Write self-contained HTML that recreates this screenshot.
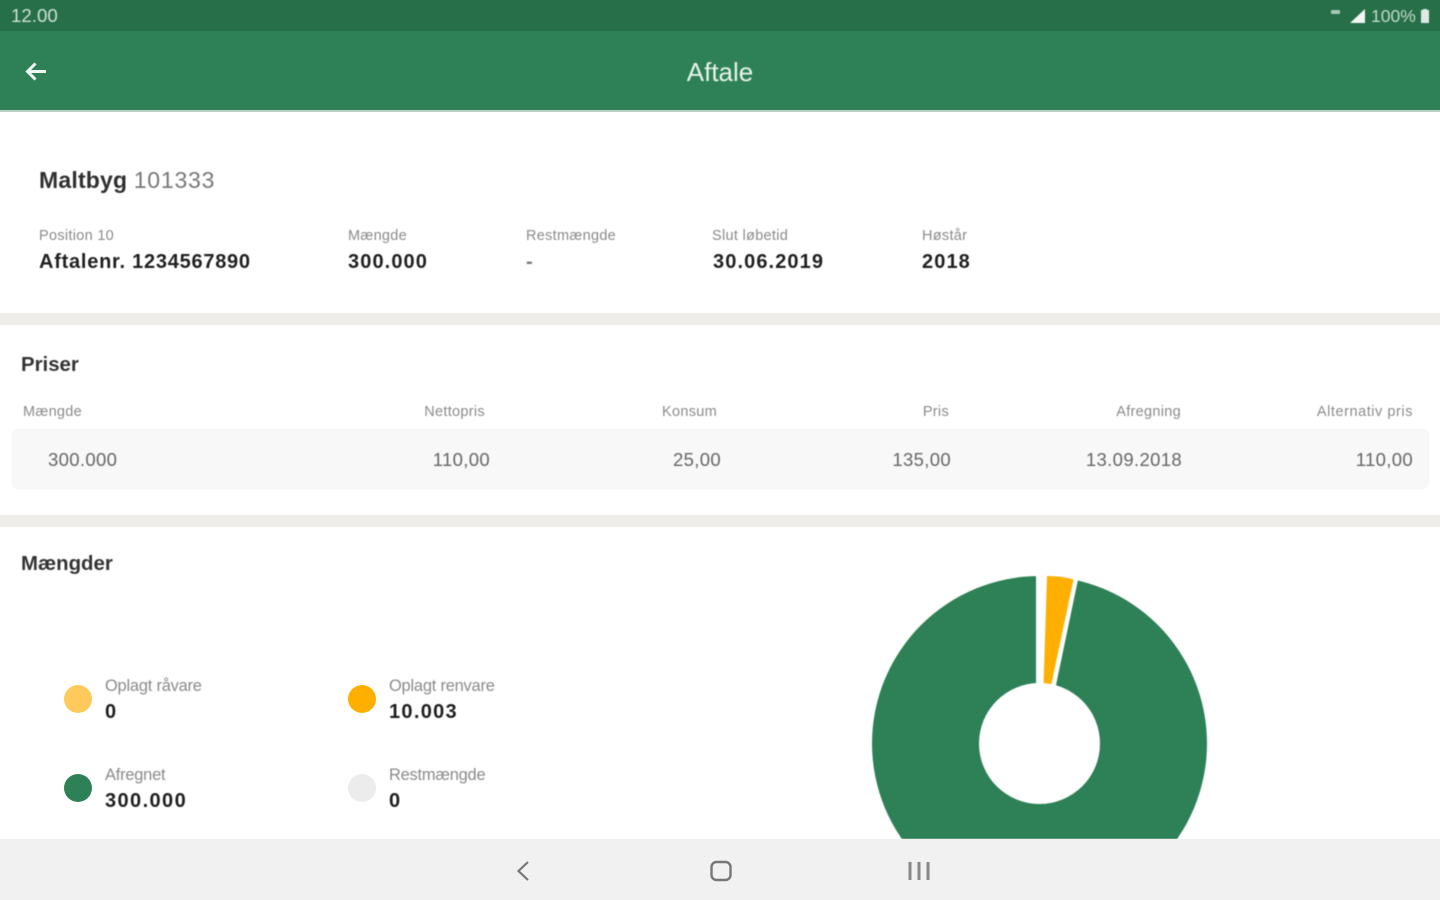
<!DOCTYPE html>
<html lang="da">
<head>
<meta charset="utf-8">
<title>Aftale</title>
<style>
html,body{margin:0;padding:0;width:1440px;height:900px;overflow:hidden;background:#fff}
body{position:relative;font-family:"Liberation Sans",sans-serif;color:#222}
.a{position:absolute;white-space:nowrap;filter:blur(.45px)}
.box{position:absolute}
.lbl{font-size:14.5px;line-height:18px;color:#8a8a8a;letter-spacing:.3px}
.leg{font-size:16.4px;letter-spacing:-.2px}
.val{font-size:20px;line-height:24px;font-weight:700;color:#1f1f1f;letter-spacing:1.1px}
.h{font-size:20.4px;line-height:24px;font-weight:700;color:#333}
.r{text-align:right}
.cell{font-size:18.5px;line-height:22px;color:#666;letter-spacing:.35px}
.dot{position:absolute;width:28px;height:28px;border-radius:50%}
</style>
</head>
<body>
<div class="box" style="left:0;top:0;width:1440px;height:31px;background:#266f49"></div>
<div class="box" style="left:0;top:31px;width:1440px;height:79px;background:#2e8156"></div>
<div class="box" style="left:0;top:110px;width:1440px;height:2px;background:#b9cfc2"></div>

<div class="a" style="left:11px;top:5px;font-size:18.7px;line-height:22px;color:#cfe0d6">12.00</div>
<svg class="box" style="left:1325px;top:4px;filter:blur(.5px)" width="115" height="24" viewBox="0 0 115 24">
  <rect x="6" y="6" width="9" height="4" rx="1" fill="#a8c8b6"/>
  <path d="M25 19 L40 5 V19 Z" fill="#f3f7f4"/>
  <path d="M96 6 h2 v-1 h4 v1 h2 v13 h-8 Z" fill="#dfeae3"/>
</svg>
<div class="a" style="left:1371px;top:5px;font-size:17.5px;line-height:22px;color:#c4d9cc">100%</div>

<svg class="box" style="left:22px;top:58px;filter:blur(.35px)" width="28" height="28" viewBox="0 0 28 28">
  <path d="M24 13.5 H6 M13.5 5.5 L5.5 13.5 L13.5 21.5" fill="none" stroke="#f2f7f4" stroke-width="3"/>
</svg>
<div class="a" style="left:620px;width:200px;top:58px;text-align:center;font-size:26px;line-height:28px;color:#e8f2ec">Aftale</div>

<div class="a" style="left:39px;top:167px;font-size:23px;line-height:27px;color:#303030"><b style="letter-spacing:.2px">Maltbyg</b> <span style="color:#777;letter-spacing:.8px">101333</span></div>

<div class="a lbl" style="left:39px;top:227px">Position 10</div>
<div class="a val" style="left:39px;top:250px;letter-spacing:.75px">Aftalenr. 1234567890</div>
<div class="a lbl" style="left:348px;top:227px">Mængde</div>
<div class="a val" style="left:348px;top:250px">300.000</div>
<div class="a lbl" style="left:526px;top:227px">Restmængde</div>
<div class="a val" style="left:526px;top:250px;color:#777">-</div>
<div class="a lbl" style="left:712px;top:227px">Slut løbetid</div>
<div class="a val" style="left:713px;top:250px">30.06.2019</div>
<div class="a lbl" style="left:922px;top:227px">Høstår</div>
<div class="a val" style="left:922px;top:250px">2018</div>

<div class="box" style="left:0;top:313px;width:1440px;height:12px;background:#efedea"></div>

<div class="a h" style="left:21px;top:353px">Priser</div>
<div class="a lbl" style="left:23px;top:403px">Mængde</div>
<div class="a lbl r" style="left:285px;width:200px;top:403px">Nettopris</div>
<div class="a lbl r" style="left:517px;width:200px;top:403px">Konsum</div>
<div class="a lbl r" style="left:749px;width:200px;top:403px">Pris</div>
<div class="a lbl r" style="left:981px;width:200px;top:403px">Afregning</div>
<div class="a lbl r" style="left:1213px;width:200px;top:403px;letter-spacing:.55px">Alternativ pris</div>

<div class="box" style="left:13px;top:430px;width:1415px;height:58px;background:#f8f8f8;border-radius:5px;box-shadow:0 0 2px #e4e4e4"></div>
<div class="a cell" style="left:48px;top:449px">300.000</div>
<div class="a cell r" style="left:290px;width:200px;top:449px">110,00</div>
<div class="a cell r" style="left:521px;width:200px;top:449px">25,00</div>
<div class="a cell r" style="left:751px;width:200px;top:449px">135,00</div>
<div class="a cell r" style="left:982px;width:200px;top:449px">13.09.2018</div>
<div class="a cell r" style="left:1213px;width:200px;top:449px">110,00</div>

<div class="box" style="left:0;top:515px;width:1440px;height:12px;background:#efedea"></div>

<div class="a h" style="left:21px;top:552px">Mængder</div>

<div class="dot" style="left:64px;top:685px;background:#ffc95c"></div>
<div class="a lbl leg" style="left:105px;top:677px">Oplagt råvare</div>
<div class="a val" style="left:105px;top:700px">0</div>

<div class="dot" style="left:348px;top:685px;background:#ffaf00"></div>
<div class="a lbl leg" style="left:389px;top:677px">Oplagt renvare</div>
<div class="a val" style="left:389px;top:700px;letter-spacing:1.3px">10.003</div>

<div class="dot" style="left:64px;top:774px;background:#2e8156"></div>
<div class="a lbl leg" style="left:105px;top:766px">Afregnet</div>
<div class="a val" style="left:105px;top:789px;letter-spacing:1.4px">300.000</div>

<div class="dot" style="left:348px;top:774px;background:#ececec"></div>
<div class="a lbl leg" style="left:389px;top:766px">Restmængde</div>
<div class="a val" style="left:389px;top:789px">0</div>

<svg class="box" style="left:860px;top:560px;filter:blur(.4px)" width="360" height="279" viewBox="860 560 360 279">
  <circle cx="1039.5" cy="743.5" r="167.5" fill="#2e8156"/>
  <path d="M1036 570 L1080 570 L1055 690 L1036 690 Z" fill="#fff"/>
  <path d="M1047 576 Q1062 576 1073.5 579.5 L1051 686 L1043.5 686 Z" fill="#ffaf00"/>
  <circle cx="1039.5" cy="743.5" r="60.5" fill="#fff"/>
</svg>

<div class="box" style="left:0;top:839px;width:1440px;height:61px;background:#f1f1f1"></div>
<svg class="box" style="left:500px;top:850px;filter:blur(.35px)" width="440" height="42" viewBox="500 850 440 42">
  <path d="M528 862 L518.5 871 L528 880" fill="none" stroke="#777" stroke-width="2.2"/>
  <rect x="711.5" y="862" width="19" height="18" rx="5" fill="none" stroke="#777" stroke-width="2.4"/>
  <path d="M910 862 V880 M919 862 V880 M928 862 V880" fill="none" stroke="#888" stroke-width="3"/>
</svg>
</body>
</html>
